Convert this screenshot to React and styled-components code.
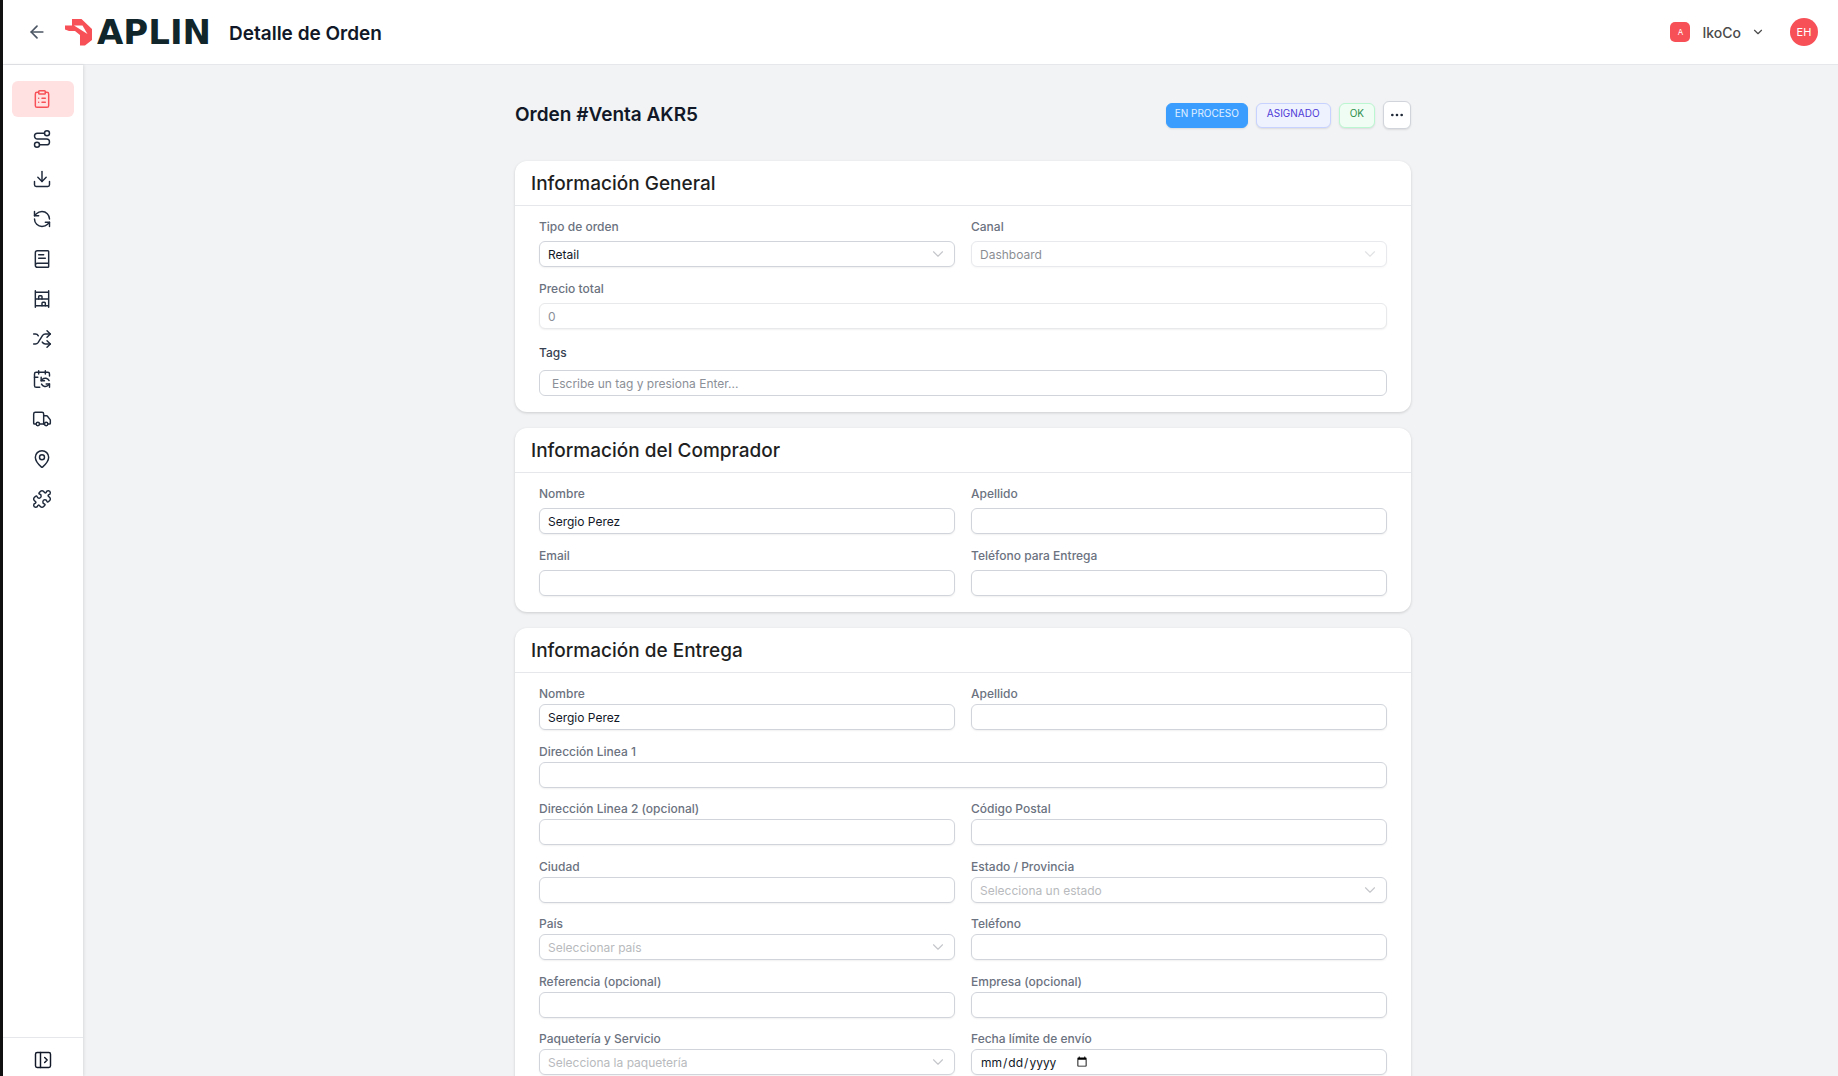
import { useState } from "react";
import styled, { createGlobalStyle } from "styled-components";
import {
    ArrowLeft,
    BookText,
    CalendarSync,
    ChevronDown,
    ClipboardList,
    Download,
    Ellipsis,
    MapPin,
    PanelLeftOpen,
    Puzzle,
    RefreshCcw,
    Route,
    Shuffle,
    Truck,
} from "lucide-react";

function ShelvesIcon({ size, strokeWidth }) {
    return (
        <svg
            width={size}
            height={size}
            viewBox="0 0 24 24"
            fill="none"
            stroke="currentColor"
            strokeWidth={strokeWidth}
            strokeLinecap="round"
            strokeLinejoin="round"
        >
            <path d="M12 12V9a1 1 0 0 0-1-1H9a1 1 0 0 0-1 1v3" />
            <path d="M16 20v-3a1 1 0 0 0-1-1h-2a1 1 0 0 0-1 1v3" />
            <path d="M20 22V2M4 12h16M4 20h16M4 2v20M4 4h16" />
        </svg>
    );
}

const navItems = [
    { name: "Órdenes", icon: ClipboardList },
    { name: "Rutas", icon: Route },
    { name: "Recepción", icon: Download },
    { name: "Devoluciones", icon: RefreshCcw },
    { name: "Catálogo", icon: BookText },
    { name: "Inventario", icon: ShelvesIcon },
    { name: "Transferencias", icon: Shuffle },
    { name: "Agenda", icon: CalendarSync },
    { name: "Flota", icon: Truck },
    { name: "Ubicaciones", icon: MapPin },
    { name: "Integraciones", icon: Puzzle },
];

function Logo() {
    return (
        <LogoBox>
            <svg width="28" height="27" viewBox="0 0 28 27" aria-hidden="true">
                <path
                    fill="#f75057"
                    d="M7 0h9.500l10.500 10v11l-7 5.500h-5V16l-5-4H4L0 10.500V6.500h7z"
                />
                <path fill="#fff" d="M9 6.500h8.500l5 8.500z" />
            </svg>
            <LogoText>APLIN</LogoText>
        </LogoBox>
    );
}

function TextField({ id, label, type = "text", value, wide, disabled }) {
    return (
        <Field $wide={wide}>
            <Label htmlFor={id}>{label}</Label>
            <Input id={id} type={type} defaultValue={value} disabled={disabled} />
        </Field>
    );
}

function SelectField({ id, label, option, placeholder, disabled }) {
    return (
        <Field>
            <Label htmlFor={id}>{label}</Label>
            <SelectBox $disabled={disabled}>
                <Select id={id} disabled={disabled} $empty={!option}>
                    <option>{option || placeholder}</option>
                </Select>
                <ChevronDown size={18} strokeWidth={1.5} />
            </SelectBox>
        </Field>
    );
}

export default function App() {
    const [active, setActive] = useState("Órdenes");

    return (
        <Page>
            <GlobalStyle />
            <Header>
                <BackButton aria-label="Volver">
                    <ArrowLeft size={20} strokeWidth={2} />
                </BackButton>
                <Logo />
                <HeaderTitle>Detalle de Orden</HeaderTitle>
                <AccountButton>
                    <AccountMark>A</AccountMark>
                    IkoCo
                    <ChevronDown size={14} strokeWidth={2} />
                </AccountButton>
                <Avatar>EH</Avatar>
            </Header>
            <Body>
                <Sidebar>
                    <Nav>
                        {navItems.map(({ name, icon: Icon }) => (
                            <NavItem
                                key={name}
                                aria-label={name}
                                $active={active === name}
                                onClick={() => setActive(name)}
                            >
                                <Icon size={20} strokeWidth={1.75} />
                            </NavItem>
                        ))}
                    </Nav>
                    <SidebarFooter>
                        <IconButton aria-label="Expandir menú">
                            <PanelLeftOpen size={20} strokeWidth={1.75} />
                        </IconButton>
                    </SidebarFooter>
                </Sidebar>
                <Main>
                    <Container>
                        <TitleRow>
                            <OrderTitle>Orden #Venta AKR5</OrderTitle>
                            <Badge $tone="blue">EN PROCESO</Badge>
                            <Badge $tone="indigo">ASIGNADO</Badge>
                            <Badge $tone="green">OK</Badge>
                            <MoreButton aria-label="Más acciones">
                                <Ellipsis size={16} strokeWidth={2} />
                            </MoreButton>
                        </TitleRow>

                        <Card>
                            <CardTitle>Información General</CardTitle>
                            <CardBody>
                                <Fields>
                                    <SelectField id="tipo" label="Tipo de orden" option="Retail" />
                                    <SelectField id="canal" label="Canal" option="Dashboard" disabled />
                                    <TextField id="precio" label="Precio total" value="0" wide disabled />
                                    <TagsField>
                                        <TagsLabel htmlFor="tags">Tags</TagsLabel>
                                        <TagsInput
                                            id="tags"
                                            placeholder="Escribe un tag y presiona Enter..."
                                        />
                                    </TagsField>
                                </Fields>
                            </CardBody>
                        </Card>

                        <Card>
                            <CardTitle>Información del Comprador</CardTitle>
                            <CardBody>
                                <Fields>
                                    <TextField id="c-nombre" label="Nombre" value="Sergio Perez" />
                                    <TextField id="c-apellido" label="Apellido" />
                                    <TextField id="c-email" label="Email" />
                                    <TextField id="c-telefono" label="Teléfono para Entrega" />
                                </Fields>
                            </CardBody>
                        </Card>

                        <Card>
                            <CardTitle>Información de Entrega</CardTitle>
                            <CardBody>
                                <Fields $compact>
                                    <TextField id="e-nombre" label="Nombre" value="Sergio Perez" />
                                    <TextField id="e-apellido" label="Apellido" />
                                    <TextField id="e-dir1" label="Dirección Linea 1" wide />
                                </Fields>
                                <Fields $compact>
                                    <TextField id="e-dir2" label="Dirección Linea 2 (opcional)" />
                                    <TextField id="e-cp" label="Código Postal" />
                                    <TextField id="e-ciudad" label="Ciudad" />
                                    <SelectField
                                        id="e-estado"
                                        label="Estado / Provincia"
                                        placeholder="Selecciona un estado"
                                    />
                                </Fields>
                                <Fields $compact>
                                    <SelectField id="e-pais" label="País" placeholder="Seleccionar país" />
                                    <TextField id="e-telefono" label="Teléfono" />
                                    <TextField id="e-ref" label="Referencia (opcional)" />
                                    <TextField id="e-empresa" label="Empresa (opcional)" />
                                </Fields>
                                <Fields $compact>
                                    <SelectField
                                        id="e-paq"
                                        label="Paquetería y Servicio"
                                        placeholder="Selecciona la paquetería"
                                    />
                                    <TextField id="e-fecha" label="Fecha límite de envío" type="date" />
                                </Fields>
                            </CardBody>
                        </Card>
                    </Container>
                </Main>
            </Body>
        </Page>
    );
}

const GlobalStyle = createGlobalStyle`
    * {
        box-sizing: border-box;
    }

    body {
        margin: 0;
        background-color: #f2f3f5;
        color: #111827;
        font-family: Inter, "Noto Sans", sans-serif;
    }

    button,
    input,
    select {
        font-family: inherit;
    }

    button {
        padding: 0;
        border: none;
        background: none;
        color: inherit;
        cursor: pointer;
    }
`;

const Page = styled.div`
    height: 100vh;
    display: flex;
    flex-direction: column;
    border-left: 3px solid #111111;
`;

const Header = styled.header`
    flex: none;
    height: 65px;
    padding: 0 20px 0 24px;
    display: flex;
    align-items: center;
    background-color: white;
    border-bottom: 1px solid #e5e7eb;
`;

const BackButton = styled.button`
    display: flex;
    margin-right: 18px;
    color: #4b5563;
`;

const LogoBox = styled.div`
    display: flex;
    align-items: center;
    gap: 4px;
    width: 146px;
    margin-right: 18px;
`;

const LogoText = styled.span`
    font-family: "DejaVu Sans", sans-serif;
    font-size: 34px;
    font-weight: 700;
    line-height: 32px;
    color: #10262a;
`;

const HeaderTitle = styled.h1`
    margin: 0;
    padding-top: 4px;
    flex: 1;
    font-size: 19px;
    font-weight: 600;
    line-height: 28px;
`;

const AccountButton = styled.button`
    display: flex;
    align-items: center;
    gap: 10px;
    margin-right: 25px;
    font-size: 14px;
    font-weight: 500;
    color: #4b4b4b;
`;

const AccountMark = styled.span`
    width: 20px;
    height: 20px;
    margin-right: 2px;
    display: grid;
    place-items: center;
    border-radius: 5px;
    background-color: #f75057;
    color: white;
    font-size: 8px;
    font-weight: 400;
`;

const Avatar = styled.button`
    width: 28px;
    height: 28px;
    border-radius: 50%;
    background-color: #f75057;
    color: white;
    font-size: 11px;
`;

const Body = styled.div`
    flex: 1;
    min-height: 0;
    display: flex;
`;

const Sidebar = styled.aside`
    flex: none;
    width: 80px;
    display: flex;
    flex-direction: column;
    background-color: white;
    box-shadow: 1px 0 3px rgba(0, 0, 0, 0.1);
`;

const Nav = styled.nav`
    flex: 1;
    display: flex;
    flex-direction: column;
    gap: 4px;
    padding: 16px 9px;
`;

const NavItem = styled.button`
    height: 36px;
    padding: 0 20px;
    display: flex;
    align-items: center;
    border-radius: 6px;
    background-color: ${(props) => (props.$active ? "#ffe1e2" : "transparent")};
    color: ${(props) => (props.$active ? "#f75057" : "#1e293b")};
`;

const SidebarFooter = styled.div`
    height: 39px;
    padding-top: 5px;
    display: flex;
    align-items: center;
    justify-content: center;
    border-top: 1px solid #e5e7eb;
`;

const IconButton = styled.button`
    display: flex;
`;

const Main = styled.main`
    flex: 1;
    overflow-y: auto;
    scrollbar-width: none;
    padding: 32px 24px 32px 29px;
`;

const Container = styled.div`
    max-width: 896px;
    margin: 0 auto;
    display: flex;
    flex-direction: column;
    gap: 16px;
`;

const TitleRow = styled.div`
    display: flex;
    align-items: center;
    gap: 8px;
    height: 36px;
    margin-bottom: 12px;
`;

const OrderTitle = styled.h2`
    margin: 0;
    flex: 1;
    font-size: 19px;
    font-weight: 600;
    line-height: 28px;
`;

const tones = {
    blue: { background: "#3b9eff", border: "#3b9eff", text: "#e0f0ff", padding: 8 },
    indigo: { background: "#eef2ff", border: "#c7d2fe", text: "#4f39d6", padding: 10 },
    green: { background: "#f0fdf4", border: "#bbf7d0", text: "#2f8f4e", padding: 10 },
};

const Badge = styled.span`
    height: 25px;
    padding: 0 ${(props) => tones[props.$tone].padding}px;
    border: 1px solid ${(props) => tones[props.$tone].border};
    border-radius: 6px;
    background-color: ${(props) => tones[props.$tone].background};
    color: ${(props) => tones[props.$tone].text};
    box-shadow: 0 1px 2px rgba(0, 0, 0, 0.1);
    font-size: 10px;
    line-height: 18px;
`;

const MoreButton = styled.button`
    width: 28px;
    height: 28px;
    display: grid;
    place-items: center;
    border: 1px solid #d1d5db;
    border-radius: 6px;
    background-color: white;
    color: #1f2937;
    box-shadow: 0 1px 2px rgba(0, 0, 0, 0.1);
`;

const Card = styled.section`
    border-radius: 12px;
    background-color: white;
    box-shadow: 0 1px 3px rgba(0, 0, 0, 0.16);
`;

const CardTitle = styled.h3`
    margin: 0;
    padding: 9px 16px 7px;
    border-bottom: 1px solid #e5e7eb;
    font-size: 19px;
    font-weight: 500;
    line-height: 28px;
    color: #1f1f1f;
`;

const CardBody = styled.div`
    padding: 13px 24px 16px;
    display: flex;
    flex-direction: column;
    gap: 13px;
`;

const Fields = styled.div`
    display: grid;
    grid-template-columns: 1fr 1fr;
    gap: 14px 16px;

    --label-gap: ${(props) => (props.$compact ? "2px" : "6px")};
`;

const Field = styled.div`
    display: flex;
    flex-direction: column;
    gap: var(--label-gap);
    grid-column: ${(props) => (props.$wide ? "1 / -1" : "auto")};
`;

const Label = styled.label`
    font-size: 12px;
    font-weight: 500;
    line-height: 16px;
    color: #6b7280;
`;

const Input = styled.input`
    width: 100%;
    height: 26px;
    padding: 0 8px;
    border: 1px solid #d1d5db;
    border-radius: 6px;
    background-color: white;
    color: #111827;
    box-shadow: 0 1px 2px rgba(0, 0, 0, 0.06);
    font-size: 12px;
    outline: none;

    &::-webkit-datetime-edit {
        flex: none;
    }

    &::placeholder {
        color: #8b8f97;
    }

    &:disabled {
        border-color: #e8e9eb;
        color: #8b8f97;
    }
`;

const SelectBox = styled.div`
    display: grid;
    grid-template-columns: 1fr 34px;
    align-items: center;
    opacity: ${(props) => (props.$disabled ? 0.5 : 1)};

    svg {
        grid-area: 1 / 2;
        justify-self: center;
        color: #c4c6ca;
        pointer-events: none;
    }
`;

const Select = styled.select`
    grid-area: 1 / 1 / 2 / 3;
    appearance: none;
    width: 100%;
    height: 26px;
    padding: 0 8px;
    border: 1px solid #d1d5db;
    border-radius: 6px;
    background-color: white;
    color: ${(props) => (props.$empty ? "#b8babd" : "#111827")};
    box-shadow: 0 1px 2px rgba(0, 0, 0, 0.06);
    font-size: 12px;
    opacity: 1;
    outline: none;
`;

const TagsField = styled.div`
    grid-column: 1 / -1;
    display: flex;
    flex-direction: column;
    gap: 7px;
`;

const TagsLabel = styled(Label)`
    line-height: 20px;
    color: #374151;
`;

const TagsInput = styled(Input)`
    padding: 0 12px;
    box-shadow: none;
`;
